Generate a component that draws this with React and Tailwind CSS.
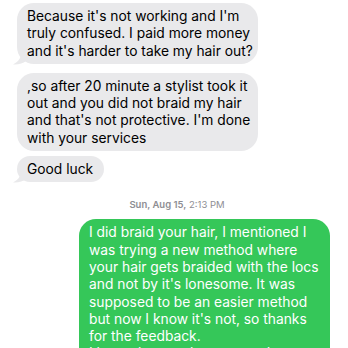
import React from "react"

const Tail = () => (
  <svg className="absolute -left-[5px] -bottom-[1px]" width="18" height="18" viewBox="0 0 18 18">
    <path d="M9 0 L9 6 C9 11 7 14 1 17.5 C6 18 11 16.5 14 14 L18 14 L18 0 Z" fill="#e9e9eb" />
  </svg>
)

const Lines = ({ lines }) =>
  lines.map((l, i) => (
    <span key={i} className="block whitespace-nowrap">
      {l}
    </span>
  ))

const Incoming = ({ lines, tail, className = "" }) => (
  <div className={`relative self-start ${className}`}>
    {tail && <Tail />}
    <div className="relative rounded-[17px] bg-[#e9e9eb] pl-[10px] pr-[11px] pt-[5px] pb-[4px] text-[13.8px] leading-[17.3px] text-black">
      <Lines lines={lines} />
    </div>
  </div>
)

export default function App() {
  return (
    <div
      className="w-[348px] h-[348px] overflow-hidden bg-white flex flex-col pt-[3px]"
      style={{ fontFamily: "Inter, 'Liberation Sans', sans-serif" }}
    >
      <div className="flex flex-col pl-[17px]">
        <Incoming
          tail
          className="w-[241px]"
          lines={["Because it's not working and I'm", "truly confused. I paid more money", "and it's harder to take my hair out?"]}
        />
        <Incoming
          className="w-[241px] mt-[9px]"
          lines={[
            ",so after 20 minute a stylist took it",
            "out and you did not braid my hair",
            "and that's not protective. I'm done",
            "with your services",
          ]}
        />
        <Incoming tail className="mt-[5px]" lines={["Good luck"]} />
      </div>

      <div className="mt-[17px] pl-[6px] text-center text-[9.5px] leading-[12px] text-[#8e8e93]">
        <span className="font-semibold">Sun, Aug 15,</span> 2:13 PM
      </div>

      <div className="mt-[8px] ml-[79px] w-[251px] rounded-[17px] bg-[#35c759] pl-[10px] pt-[5px] pb-[8px] text-[13.8px] leading-[17.3px] text-white">
        <Lines
          lines={[
            "I did braid your hair, I mentioned I",
            "was trying a new method where",
            "your hair gets braided with the locs",
            "and not by it's lonesome. It was",
            "supposed to be an easier method",
            "but now I know it's not, so thanks",
            "for the feedback.",
            "I hope that you have a good one",
          ]}
        />
      </div>
    </div>
  )
}
